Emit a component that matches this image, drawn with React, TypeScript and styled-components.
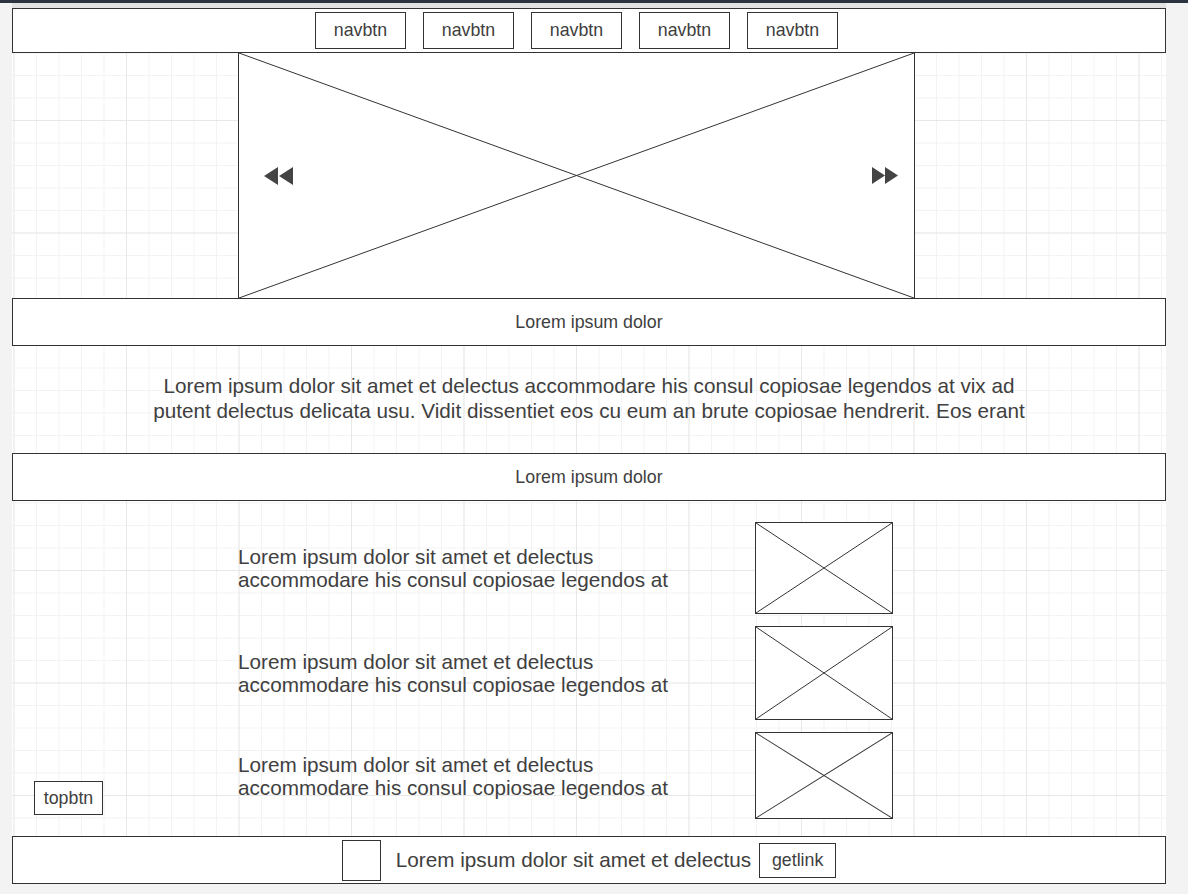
import React from 'react';
import styled, { createGlobalStyle } from 'styled-components';

const GlobalStyle = createGlobalStyle`
  html, body {
    margin: 0;
    padding: 0;
  }
  body {
    width: 1188px;
    height: 894px;
    overflow: hidden;
    background: #f3f3f3;
    font-family: "Liberation Sans", Arial, sans-serif;
    color: #404040;
  }
`;

const TopStrip = styled.div`
  height: 3px;
  background: #2d3340;
`;

const Workspace = styled.div`
  padding-left: 12px;
`;

const PageTab = styled.div`
  width: 1154px;
  height: 5px;
  background: #e2e2e2;
`;

const Canvas = styled.main`
  width: 1154px;
  display: flex;
  flex-direction: column;
  background-color: #fff;
  background-image:
    linear-gradient(to right, #e8e8e8 1px, transparent 1px),
    linear-gradient(to bottom, #e8e8e8 1px, transparent 1px),
    linear-gradient(to right, #f3f3f3 1px, transparent 1px),
    linear-gradient(to bottom, #f3f3f3 1px, transparent 1px);
  background-size: 112.5px 112.5px, 112.5px 112.5px, 22.5px 22.5px, 22.5px 22.5px;
  background-position: 1.5px 0, 0 112px, 1.5px 0, 0 22px;
`;

const NavBar = styled.nav`
  box-sizing: border-box;
  height: 45px;
  border: 1px solid #333;
  background: #fff;
  display: flex;
  align-items: center;
  gap: 17px;
  padding-left: 302px;
`;

const OutlineButton = styled.button<{ $w: number; $h: number }>`
  box-sizing: border-box;
  width: ${(p) => p.$w}px;
  height: ${(p) => p.$h}px;
  padding: 0;
  border: 1px solid #333;
  background: #fff;
  color: #404040;
  font-family: inherit;
  font-size: 17.8px;
  flex-shrink: 0;
`;

const Hero = styled.section`
  margin-top: -1px;
  padding-left: 226px;
  display: flex;
`;

const HeroImage = styled.div`
  position: relative;
  box-sizing: border-box;
  width: 677px;
  height: 247px;
  border: 1px solid #333;
  background: #fff;
`;

const Cross = styled.svg`
  display: block;
  width: 100%;
  height: 100%;
`;

const Arrow = styled.span<{ $side: 'left' | 'right'; $offset: number }>`
  position: absolute;
  top: 114px;
  ${(p) => p.$side}: ${(p) => p.$offset}px;
  display: flex;
`;

const Bar = styled.div<{ $overlap?: boolean }>`
  box-sizing: border-box;
  height: 48px;
  margin-top: ${(p) => (p.$overlap ? -1 : 0)}px;
  border: 1px solid #333;
  background: #fff;
  display: flex;
  align-items: center;
  justify-content: center;
  font-size: 17.8px;
`;

const Intro = styled.section`
  height: 107px;
  box-sizing: border-box;
  padding-bottom: 3px;
  display: flex;
  align-items: center;
  justify-content: center;
`;

const IntroText = styled.p`
  margin: 0;
  width: 890px;
  text-align: center;
  font-size: 20.7px;
  line-height: 25px;
`;

const Feature = styled.section`
  height: 335px;
  display: flex;
`;

const LeftRail = styled.div`
  box-sizing: border-box;
  width: 226px;
  display: flex;
  align-items: flex-end;
  padding: 0 0 21px 22px;
`;

const RowList = styled.div`
  display: flex;
  flex-direction: column;
  gap: 12px;
  padding-top: 21px;
`;

const Row = styled.div`
  display: grid;
  grid-template-columns: 460px 138px;
  column-gap: 57px;
  align-items: center;
`;

const RowText = styled.p`
  margin: 0;
  font-size: 20.7px;
  line-height: 23px;
`;

const Thumb = styled.div<{ $h: number }>`
  box-sizing: border-box;
  width: 138px;
  height: ${(p) => p.$h}px;
  border: 1px solid #333;
  background: #fff;
`;

const Footer = styled.footer`
  box-sizing: border-box;
  height: 48px;
  border: 1px solid #333;
  background: #fff;
  display: flex;
  align-items: center;
  justify-content: center;
`;

const Avatar = styled.div`
  box-sizing: border-box;
  width: 39px;
  height: 41px;
  border: 1px solid #333;
`;

const FooterText = styled.span`
  margin: 0 8px 0 15px;
  font-size: 20.7px;
`;

const CrossLines = () => (
  <Cross viewBox="0 0 100 100" preserveAspectRatio="none">
    <line x1="0" y1="0" x2="100" y2="100" stroke="#333" strokeWidth="1" vectorEffect="non-scaling-stroke" />
    <line x1="100" y1="0" x2="0" y2="100" stroke="#333" strokeWidth="1" vectorEffect="non-scaling-stroke" />
  </Cross>
);

const Rewind = () => (
  <svg width="29" height="19" viewBox="0 0 29 19">
    <polygon points="14,0 14,18 0,9" fill="#444" />
    <polygon points="29,0 29,18 15,9" fill="#444" />
  </svg>
);

const Forward = () => (
  <svg width="27" height="18" viewBox="0 0 27 18">
    <polygon points="0,0 0,17 13,8.5" fill="#444" />
    <polygon points="13,0 13,17 26,8.5" fill="#444" />
  </svg>
);

const rowText = 'Lorem ipsum dolor sit amet et delectus accommodare his consul copiosae legendos at';
const thumbHeights = [92, 94, 87];

export default function App() {
  return (
    <>
      <GlobalStyle />
      <TopStrip />
      <Workspace>
        <PageTab />
        <Canvas>
          <NavBar>
            {[0, 1, 2, 3, 4].map((i) => (
              <OutlineButton key={i} $w={91} $h={37}>
                navbtn
              </OutlineButton>
            ))}
          </NavBar>

          <Hero>
            <HeroImage>
              <CrossLines />
              <Arrow $side="left" $offset={25}>
                <Rewind />
              </Arrow>
              <Arrow $side="right" $offset={15}>
                <Forward />
              </Arrow>
            </HeroImage>
          </Hero>

          <Bar $overlap>Lorem ipsum dolor</Bar>

          <Intro>
            <IntroText>
              Lorem ipsum dolor sit amet et delectus accommodare his consul copiosae legendos at vix ad
              putent delectus delicata usu. Vidit dissentiet eos cu eum an brute copiosae hendrerit. Eos erant
            </IntroText>
          </Intro>

          <Bar>Lorem ipsum dolor</Bar>

          <Feature>
            <LeftRail>
              <OutlineButton $w={69} $h={34}>topbtn</OutlineButton>
            </LeftRail>
            <RowList>
              {thumbHeights.map((h, i) => (
                <Row key={i}>
                  <RowText>{rowText}</RowText>
                  <Thumb $h={h}>
                    <CrossLines />
                  </Thumb>
                </Row>
              ))}
            </RowList>
          </Feature>

          <Footer>
            <Avatar />
            <FooterText>Lorem ipsum dolor sit amet et delectus</FooterText>
            <OutlineButton $w={77} $h={35}>getlink</OutlineButton>
          </Footer>
        </Canvas>
      </Workspace>
    </>
  );
}
